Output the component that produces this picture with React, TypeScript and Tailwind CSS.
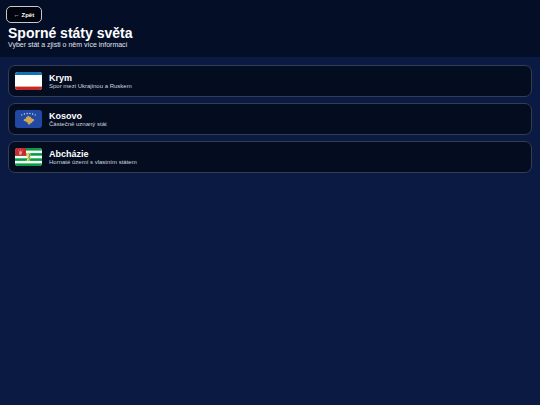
import type { ReactNode } from "react";

type Territory = {
  id: string;
  name: string;
  description: string;
  flag: ReactNode;
};

function CrimeaFlag() {
  return (
    <svg viewBox="0 0 27 18" className="h-full w-full" aria-hidden="true">
      <rect width="27" height="18" fill="#ffffff" />
      <rect width="27" height="3" fill="#1273b0" />
      <rect y="14.6" width="27" height="3.4" fill="#c62828" />
    </svg>
  );
}

function KosovoFlag() {
  return (
    <svg viewBox="0 0 27 18" className="h-full w-full" aria-hidden="true">
      <rect width="27" height="18" fill="#2149a4" />
      <g fill="#dbe3f5">
        <circle cx="6.8" cy="4.9" r="0.6" />
        <circle cx="9.4" cy="4" r="0.65" />
        <circle cx="12.1" cy="3.5" r="0.65" />
        <circle cx="14.9" cy="3.5" r="0.65" />
        <circle cx="17.6" cy="4" r="0.65" />
        <circle cx="20.2" cy="4.9" r="0.6" />
      </g>
      <path
        d="M12.8 5.4l1.4 1.2 1.6.5.8 1.3 2.4.9.3 1.3-1.6 1-1 1.5-1.6.3-.8 1.7-1.5-1.3-.2-1.3-2-1-2-.8.4-1.4 1.6-.6.5-1.5 1.3-.4z"
        fill="#d0a650"
      />
    </svg>
  );
}

function AbkhaziaFlag() {
  return (
    <svg viewBox="0 0 27 18" className="h-full w-full" aria-hidden="true">
      <rect width="27" height="18" fill="#f5fff8" />
      <g fill="#0b9a48">
        <rect width="27" height="2.6" />
        <rect y="5.1" width="27" height="2.6" />
        <rect y="10.3" width="27" height="2.6" />
        <rect y="15.4" width="27" height="2.6" />
      </g>
      <rect width="11" height="7.8" fill="#c62b30" />
      <path
        d="M4.2 6.8V4l.3-1.5.5 1.2.2-1.6.6 1.4.5-1.2.2 1.8.6-.8-.1 2-.9 1.5z"
        fill="#e79a98"
      />
      <path d="M3 2.6l1-.7M5 1.3h1M7.2 1.9l1 .7" stroke="#e79a98" strokeWidth="0.5" />
      <path d="M11.2 4.7h2.9l1.8 1.1-.9 1.8.8 2-1.1 3.4h-3.3l1.2-3-1-2.2z" fill="#e4d86c" />
      <path d="M13.8 5.3l1 1.8-.9 2 .6 2.5-1 1.2" fill="none" stroke="#368647" strokeWidth="0.8" />
    </svg>
  );
}

const territories: Territory[] = [
  { id: "krym", name: "Krym", description: "Spor mezi Ukrajinou a Ruskem", flag: <CrimeaFlag /> },
  { id: "kosovo", name: "Kosovo", description: "Částečně uznaný stát", flag: <KosovoFlag /> },
  { id: "abchazie", name: "Abcházie", description: "Hornaté území s vlastním státem", flag: <AbkhaziaFlag /> },
];

export default function App() {
  return (
    <div className="min-h-screen bg-[#0a1a42] font-['Liberation_Sans',Arial,sans-serif] text-white">
      <header className="bg-[#040e27] px-2 pt-1.5 pb-2">
        <button
          type="button"
          className="-ml-0.5 flex h-[17px] w-9 items-center justify-center rounded-[5px] border border-[#c5c9d2] bg-[#01040d] text-[6px] leading-none font-bold text-white"
        >
          ← Zpět
        </button>
        <h1 className="mt-0.5 text-[14px] leading-4 font-bold">Sporné státy světa</h1>
        <p className="text-[7px] leading-2 text-[#e0e4ec]">Vyber stát a zjisti o něm více informací</p>
      </header>
      <main className="p-2">
        <ul className="flex flex-col gap-1.5">
          {territories.map((territory) => (
            <li key={territory.id}>
              <a
                href={`#${territory.id}`}
                className="flex h-8 items-center gap-[7px] rounded-[7px] border border-[#333d54] bg-[#040c20] px-1.5"
              >
                <span className="h-[18px] w-[27px] shrink-0 overflow-hidden rounded-[3px]">
                  {territory.flag}
                </span>
                <span className="flex flex-col">
                  <span className="text-[9px] leading-[10px] font-bold">{territory.name}</span>
                  <span className="text-[6px] leading-[7px] text-[#d0d5df]">{territory.description}</span>
                </span>
              </a>
            </li>
          ))}
        </ul>
      </main>
    </div>
  );
}
